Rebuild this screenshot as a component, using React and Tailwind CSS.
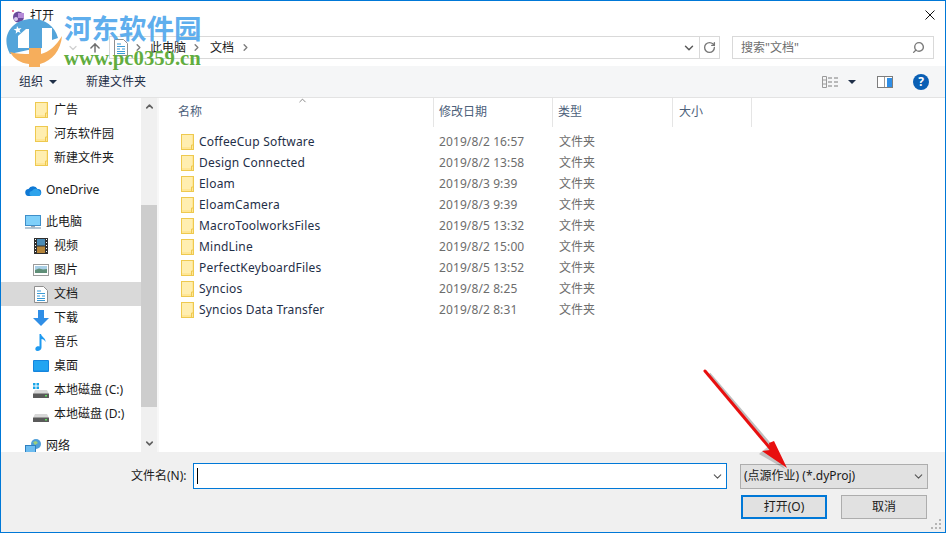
import { ArrowUp, ChevronDown, ChevronRight, ChevronUp, RotateCw, Search } from "lucide-react";

const font = "font-['Noto_Sans','Noto_Sans_CJK_SC',sans-serif]";

const files = [
  ["CoffeeCup Software", "2019/8/2 16:57"],
  ["Design Connected", "2019/8/2 13:58"],
  ["Eloam", "2019/8/3 9:39"],
  ["EloamCamera", "2019/8/3 9:39"],
  ["MacroToolworksFiles", "2019/8/5 13:32"],
  ["MindLine", "2019/8/2 15:00"],
  ["PerfectKeyboardFiles", "2019/8/5 13:52"],
  ["Syncios", "2019/8/2 8:25"],
  ["Syncios Data Transfer", "2019/8/2 8:31"],
];

function Folder({ className = "" }) {
  return (
    <svg width="13" height="16" viewBox="0 0 13 16" className={className}>
      <rect x="0.5" y="0.5" width="12" height="15" fill="#ffe696" stroke="#eec94f" />
      <rect x="1" y="1" width="10" height="12" fill="#ffeeb0" />
      <path d="M10.5 15.5V11h2" fill="none" stroke="#eec94f" />
    </svg>
  );
}

function DocIcon() {
  return (
    <svg width="14" height="17" viewBox="0 0 14 17">
      <path d="M.5.5h9l4 4v12H.5z" fill="#fff" stroke="#8f8f8f" />
      <path d="M3 5h4M3 7.500h8M8 10h3M3 10h3M3 12.500h8M3 14.500h8" stroke="#3b9ad6" />
    </svg>
  );
}

function Computer() {
  return (
    <svg width="16" height="14" viewBox="0 0 16 14">
      <rect x="0.5" y="0.5" width="15" height="10" fill="#7fd0fa" stroke="#3f8fc9" />
      <path d="M6 11h4v1.500H6z" fill="#9aa7b3" />
      <path d="M0 13h16" stroke="#9db4c6" strokeWidth="1.500" />
    </svg>
  );
}

function Cloud() {
  return (
    <svg width="17" height="11" viewBox="0 0 17 11">
      <path d="M4 11a3.500 3.500 0 0 1-.5-7A5 5 0 0 1 12.500 4 3.500 3.500 0 0 1 13 11z" fill="#0f78d4" />
      <path d="M7 11a2.500 2.500 0 0 1 0-5 4 4 0 0 1 7-.5 3 3 0 0 1 0 5.500z" fill="#2ea3eb" />
    </svg>
  );
}

function Film() {
  return (
    <svg width="14" height="16" viewBox="0 0 14 16">
      <rect width="14" height="16" fill="#2f2f2f" />
      <rect x="3" y="1" width="8" height="6.500" fill="#4a8bb5" />
      <rect x="3" y="8.500" width="8" height="6.500" fill="#b5853a" />
      <path d="M1 1.500h1M1 4.500h1M1 7.500h1M1 10.500h1M1 13.500h1M12 1.500h1M12 4.500h1M12 7.500h1M12 10.500h1M12 13.500h1" stroke="#fff" />
    </svg>
  );
}

function Picture() {
  return (
    <svg width="16" height="12" viewBox="0 0 16 12">
      <rect x="0.500" y="0.500" width="15" height="11" fill="#fff" stroke="#9b9b9b" />
      <rect x="2" y="2" width="12" height="4" fill="#a9cfe6" />
      <path d="M2 6l4-1.500 4 1 4-.5v4H2z" fill="#5f8f78" />
    </svg>
  );
}

function DownArrow() {
  return (
    <svg width="16" height="16" viewBox="0 0 16 16">
      <path d="M5 0h6v8h5l-8 8-8-8h5z" fill="#2f8ee6" />
    </svg>
  );
}

function Note() {
  return (
    <svg width="12" height="17" viewBox="0 0 12 17">
      <path d="M4.500 0h1.500c.5 3 5 4 4.500 8-.8-2-2.500-3-4-3v8.500c0 2-2 3.500-4 3.500S0 15.500.5 14c.5-1.500 2.500-2.200 4-1.500z" fill="#1e9af0" />
    </svg>
  );
}

function Desktop() {
  return (
    <svg width="16" height="12" viewBox="0 0 16 12">
      <rect width="16" height="12" rx="1" fill="#1485de" />
      <rect x="1" y="1" width="14" height="9.500" fill="#22a5f2" />
    </svg>
  );
}

function Drive({ windows }) {
  return (
    <svg width="16" height="15" viewBox="0 0 16 15">
      {windows && <path d="M0 0h2.500v2.500H0zM3.500 0H6v2.500H3.500zM0 3.500h2.500V6H0zM3.500 3.500H6V6H3.500z" fill="#19a5e8" />}
      <path d="M2 7h12l2 4H0z" fill="#d8d8d8" />
      <rect y="10.500" width="16" height="4.500" rx="0.500" fill="#5a5a5a" />
      <rect x="12" y="12" width="2" height="1.500" fill="#5fe05f" />
    </svg>
  );
}

function Network() {
  return (
    <svg width="17" height="15" viewBox="0 0 17 15">
      <circle cx="11" cy="5" r="5" fill="#4f9fd8" />
      <path d="M8 3l3-1 2 2-3 2z" fill="#9ed07a" />
      <rect x="0.500" y="6.500" width="10" height="8" fill="#6cbcf0" stroke="#2f80c0" />
    </svg>
  );
}

function NavRow({ icon, label, indent, selected, className = "" }) {
  return (
    <div className={`flex h-6 items-center ${selected ? "bg-[#d9d9d9]" : ""} ${className}`}>
      <div className={`flex shrink-0 ${indent ? "w-[53px] justify-center pl-[27px]" : "w-[45px] justify-start pl-[24px]"}`}>{icon}</div>
      <span>{label}</span>
    </div>
  );
}

function Grip() {
  return (
    <svg width="11" height="11" viewBox="0 0 11 11" className="absolute bottom-[2px] right-[3px]">
      <path d="M8 0h2v2H8zM4 4h2v2H4zM8 4h2v2H8zM0 8h2v2H0zM4 8h2v2H4zM8 8h2v2H8z" fill="#b5b5b5" />
    </svg>
  );
}

function Crumb({ className = "" }) {
  return <ChevronRight size={11} strokeWidth={3} className={`text-[#7d7d7d] ${className}`} />;
}

export default function App() {
  return (
    <div className={`${font} relative flex h-[533px] w-[946px] flex-col overflow-hidden border border-[#0078d7] bg-white text-[12px] text-[#1a1a1a]`}>
      {/* title bar */}
      <div className="flex h-[35px] items-start justify-between pl-[11px] pr-[10px] pt-[6px]">
        <div className="flex items-center">
          <svg width="13" height="13" viewBox="0 0 13 13">
            <circle cx="6.500" cy="7" r="5.500" fill="#6b4a9c" />
            <rect x="6" y="3" width="6" height="5" fill="#b58ad8" />
            <circle cx="4" cy="9" r="2" fill="#d9c9ee" />
            <rect x="0" y="0" width="2" height="2" fill="#e77a9a" />
          </svg>
          <span className="ml-[5px] leading-[18px]">打开</span>
        </div>
        <svg width="10" height="10" viewBox="0 0 10 10" className="mt-[3px]">
          <path d="M.5.500l9 9M9.500.500l-9 9" stroke="#111" strokeWidth="1" />
        </svg>
      </div>

      {/* address bar */}
      <div className="flex h-[23px] items-center pl-[66px]">
        <ChevronDown size={12} strokeWidth={2.500} className="mr-[9px] text-[#d0d0d0]" />
        <ArrowUp size={14} strokeWidth={2.500} className="mr-[7px] text-[#6f6f6f]" />
        <div className="flex h-[23px] w-[611px] shrink-0 items-center border border-[#d9d9d9] pl-[4px]">
          <DocIcon />
          <Crumb className="ml-[5px]" />
          <span className="ml-[6px]">此电脑</span>
          <Crumb className="ml-[5px]" />
          <span className="ml-[8px]">文档</span>
          <Crumb className="ml-[6px]" />
          <div className="ml-auto flex h-full items-center">
            <ChevronDown size={14} strokeWidth={2.500} className="mr-[3px] text-[#5a5a5a]" />
            <div className="flex h-full w-[20px] items-center justify-center border-l border-[#d9d9d9]">
              <RotateCw size={13} strokeWidth={2.500} className="text-[#777]" />
            </div>
          </div>
        </div>
        <div className="ml-[12px] flex h-[23px] w-[202px] shrink-0 items-center justify-between border border-[#d9d9d9] pl-[8px] pr-[8px] text-[#6d6d6d]">
          <span>搜索"文档"</span>
          <Search size={13} strokeWidth={2.600} className="-scale-x-100 text-[#7a7a7a]" />
        </div>
      </div>

      {/* toolbar */}
      <div className="mt-[7px] flex h-[32px] items-center border-b border-[#e3e3e3] bg-[#f5f6f7] pl-[18px] pr-[16px] text-[#1f2f48]">
        <span>组织</span>
        <span className="ml-[6px] h-0 w-0 border-x-[4px] border-t-[4px] border-x-transparent border-t-[#1f2f48]" />
        <span className="ml-[29px]">新建文件夹</span>
        <svg width="16" height="12" viewBox="0 0 16 12" className="ml-auto">
          <path d="M.5.500h4v11h-4zM.5 4h4M.5 8h4" fill="none" stroke="#9a9a9a" />
          <path d="M6 2h4M12 2h4M6 6h4M12 6h4M6 10h4M12 10h4" stroke="#7d7d7d" />
        </svg>
        <span className="ml-[10px] h-0 w-0 border-x-[4px] border-t-[4px] border-x-transparent border-t-[#1f2f48]" />
        <svg width="16" height="12" viewBox="0 0 16 12" className="ml-[21px]">
          <rect x="0.500" y="0.500" width="15" height="11" fill="#fff" stroke="#7d7d7d" />
          <rect x="10" y="2" width="5" height="9" fill="#2f8ee6" />
          <path d="M7.500 1v10" stroke="#9a9a9a" />
        </svg>
        <div className="ml-[20px] flex h-4 w-4 items-center justify-center rounded-full bg-[#0a5fb4] text-[12px] font-bold leading-none text-white">?</div>
      </div>

      {/* main */}
      <div className="flex min-h-0 flex-1">
        {/* nav pane */}
        <div className="flex w-[156px] shrink-0">
          <div className="h-full w-[140px]">
            <NavRow indent icon={<Folder />} label="广告" />
            <NavRow indent icon={<Folder />} label="河东软件园" />
            <NavRow indent icon={<Folder />} label="新建文件夹" />
            <NavRow className="mt-[8px]" icon={<Cloud />} label="OneDrive" />
            <NavRow className="mt-[8px]" icon={<Computer />} label="此电脑" />
            <NavRow indent icon={<Film />} label="视频" />
            <NavRow indent icon={<Picture />} label="图片" />
            <NavRow indent selected icon={<DocIcon />} label="文档" />
            <NavRow indent icon={<DownArrow />} label="下载" />
            <NavRow indent icon={<Note />} label="音乐" />
            <NavRow indent icon={<Desktop />} label="桌面" />
            <NavRow indent icon={<Drive windows />} label="本地磁盘 (C:)" />
            <NavRow indent icon={<Drive />} label="本地磁盘 (D:)" />
            <NavRow className="mt-[8px]" icon={<Network />} label="网络" />
          </div>
          <div className="flex h-full w-4 flex-col bg-[#f0f0f0]">
            <div className="flex h-[17px] items-center justify-center">
              <ChevronUp size={11} strokeWidth={3.500} className="text-[#606060]" />
            </div>
            <div className="mt-[90px] h-[202px] bg-[#cdcdcd]" />
            <div className="mt-auto flex h-[17px] items-center justify-center">
              <ChevronDown size={11} strokeWidth={3.500} className="text-[#606060]" />
            </div>
          </div>
        </div>
        <div className="w-[2px] shrink-0 bg-[#f7f7f7]" />

        {/* file list */}
        <div className="min-w-0 flex-1">
          <div className="relative flex h-[29px] text-[#4c607a]">
            <ChevronUp size={11} strokeWidth={1.500} className="absolute left-[138px] top-[-3px] text-[#555]" />
            <div className="w-[274px] pl-[19px] pt-[5px]">名称</div>
            <div className="w-[119px] border-l border-[#e5e5e5] pl-[5px] pt-[5px]">修改日期</div>
            <div className="w-[120px] border-l border-[#e5e5e5] pl-[5px] pt-[5px]">类型</div>
            <div className="w-[80px] border-x border-[#e5e5e5] pl-[6px] pt-[5px]">大小</div>
          </div>
          <div className="pt-[4px]">
            {files.map(([name, date]) => (
              <div key={name} className="flex h-[21px] items-center">
                <div className="w-[40px] shrink-0 pl-[22px]"><Folder /></div>
                <div className="w-[240px] shrink-0 tracking-[0.2px] text-[#1f2f48]">{name}</div>
                <div className="w-[120px] shrink-0 tracking-[0.1px] text-[#6d6d6d]">{date}</div>
                <div className="text-[#6d6d6d]">文件夹</div>
              </div>
            ))}
          </div>
        </div>
      </div>

      {/* bottom bar */}
      <div className="relative flex h-[80px] shrink-0 bg-[#f0f0f0] pl-[130px] pr-[17px]">
        <div className="flex flex-1 flex-col">
          <div className="mt-[11px] flex items-center">
            <span className="w-[62px] shrink-0">文件名(N):</span>
            <div className="flex h-[26px] w-[534px] items-center justify-between border border-[#0078d7] bg-white pl-[3px] pr-[2px]">
              <span className="h-[16px] w-px bg-black" />
              <ChevronDown size={13} className="text-[#555]" />
            </div>
            <div className="ml-[13px] flex h-[25px] w-[188px] items-center justify-between border border-[#adadad] bg-[#e1e1e1] pl-[3px] pr-[2px]">
              <span>(点源作业) (*.dyProj)</span>
              <ChevronDown size={13} className="text-[#555]" />
            </div>
          </div>
          <div className="mt-[6px] flex justify-end gap-[14px] pr-[1px]">
            <div className="flex h-[24px] w-[86px] items-center justify-center border-2 border-[#0078d7] bg-[#e1e1e1]">打开(O)</div>
            <div className="flex h-[24px] w-[86px] items-center justify-center border border-[#adadad] bg-[#e1e1e1]">取消</div>
          </div>
        </div>
        <Grip />
      </div>

      {/* watermark */}
      <svg width="64" height="68" viewBox="0 0 64 68" className="pointer-events-none absolute left-[-1px] top-[-1px]">
        <path d="M10 54C0 36 12 19 32 19c13 0 23 7 26 19l-6 2V28H42v20l-14 2-18 4z" fill="#53a4da" />
        <path d="M18 48V36l8-7h3v19z" fill="#fff" />
        <path d="M10 52c8 2 14 2 19 2v-6h12v6c8-2 15-8 21-18-1 14-10 25-22 28v3H29v-3c-9-1-15-5-19-12z" fill="#f6ae5c" />
        <path d="M17 26l1.500 2.500 3-.5-2 2.300 1.200 2.700-2.700-1.200-2.300 2 .4-3-2.500-1.500 3-.6z" fill="#fff" />
      </svg>
      <div className="pointer-events-none absolute left-[63px] top-[13px]">
        <div className="font-['Liberation_Serif','Noto_Sans_CJK_SC',serif] text-[27.500px] font-bold leading-[32px] text-[#55a9ec]/95">河东软件园</div>
        <div className="mt-[3px] font-['Liberation_Serif',serif] text-[20.700px] font-bold leading-[18px] text-[#62ad3f]">www.pc0359.cn</div>
      </div>

      {/* red arrow */}
      <svg width="100" height="110" viewBox="0 0 100 110" className="pointer-events-none absolute left-[695px] top-[364px]">
        <path d="M10 8L77 86" stroke="#00000040" strokeWidth="3.500" transform="translate(3 1)" />
        <path d="M66 88l12-10 14 25z" fill="#00000030" transform="translate(-3 1)" />
        <path d="M9 6L78 88" stroke="#e80f0f" strokeWidth="3" strokeLinecap="round" />
        <path d="M91 103L66 86l8-1-1-7 5-2z" fill="#e80f0f" />
      </svg>
    </div>
  );
}
